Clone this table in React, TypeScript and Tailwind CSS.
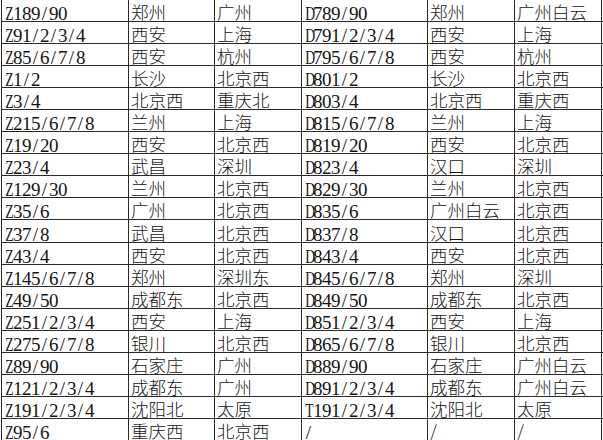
import React from "react";

// train number pairs: Z/T trains on the left, D trains on the right
const rows: string[][] = [
  ["Z189/90", "郑州", "广州", "D789/90", "郑州", "广州白云"],
  ["Z91/2/3/4", "西安", "上海", "D791/2/3/4", "西安", "上海"],
  ["Z85/6/7/8", "西安", "杭州", "D795/6/7/8", "西安", "杭州"],
  ["Z1/2", "长沙", "北京西", "D801/2", "长沙", "北京西"],
  ["Z3/4", "北京西", "重庆北", "D803/4", "北京西", "重庆西"],
  ["Z215/6/7/8", "兰州", "上海", "D815/6/7/8", "兰州", "上海"],
  ["Z19/20", "西安", "北京西", "D819/20", "西安", "北京西"],
  ["Z23/4", "武昌", "深圳", "D823/4", "汉口", "深圳"],
  ["Z129/30", "兰州", "北京西", "D829/30", "兰州", "北京西"],
  ["Z35/6", "广州", "北京西", "D835/6", "广州白云", "北京西"],
  ["Z37/8", "武昌", "北京西", "D837/8", "汉口", "北京西"],
  ["Z43/4", "西安", "北京西", "D843/4", "西安", "北京西"],
  ["Z145/6/7/8", "郑州", "深圳东", "D845/6/7/8", "郑州", "深圳"],
  ["Z49/50", "成都东", "北京西", "D849/50", "成都东", "北京西"],
  ["Z251/2/3/4", "西安", "上海", "D851/2/3/4", "西安", "上海"],
  ["Z275/6/7/8", "银川", "北京西", "D865/6/7/8", "银川", "北京西"],
  ["Z89/90", "石家庄", "广州", "D889/90", "石家庄", "广州白云"],
  ["Z121/2/3/4", "成都东", "广州", "D891/2/3/4", "成都东", "广州白云"],
  ["Z191/2/3/4", "沈阳北", "太原", "T191/2/3/4", "沈阳北", "太原"],
  ["Z95/6", "重庆西", "北京西", "/", "/", "/"],
];

const widths = ["w-[127px]", "w-[86px]", "w-[87px]", "w-[126px]", "w-[87px]", "w-[88px]"];

// serif latin laid out on a fixed 9px pitch, like the half-width glyphs of a song font
function Code({ text }: { text: string }) {
  return (
    <span className="font-['Liberation_Serif',serif] text-[19px] leading-[15px]">
      {text.split("").map((ch, k) => (
        <span
          key={k}
          className={`inline-block w-[9px] text-center ${/[A-Z]/.test(ch) ? "scale-x-[0.72]" : ""}`}
        >
          {ch}
        </span>
      ))}
    </span>
  );
}

export default function App() {
  return (
    <div className="h-[440px] w-[603px] overflow-hidden bg-white pl-px text-[#141414]">
      {rows.map((r, i) => (
        <div key={i} className="flex h-[22.05px] border-b border-[#2a2a2a]">
          {r.map((cell, j) => {
            const isCode = j === 0 || j === 3;
            return (
              <div
                key={j}
                className={`${widths[j]} flex shrink-0 items-end border-l border-[#2a2a2a] pl-[2px] whitespace-nowrap ${
                  j === 5 ? "border-r" : ""
                } ${isCode ? "leading-[15px]" : "font-['Noto_Sans_CJK_SC',sans-serif] text-[17.5px] leading-[18px] font-light"}`}
              >
                {isCode ? <Code text={cell} /> : cell}
              </div>
            );
          })}
        </div>
      ))}
    </div>
  );
}
